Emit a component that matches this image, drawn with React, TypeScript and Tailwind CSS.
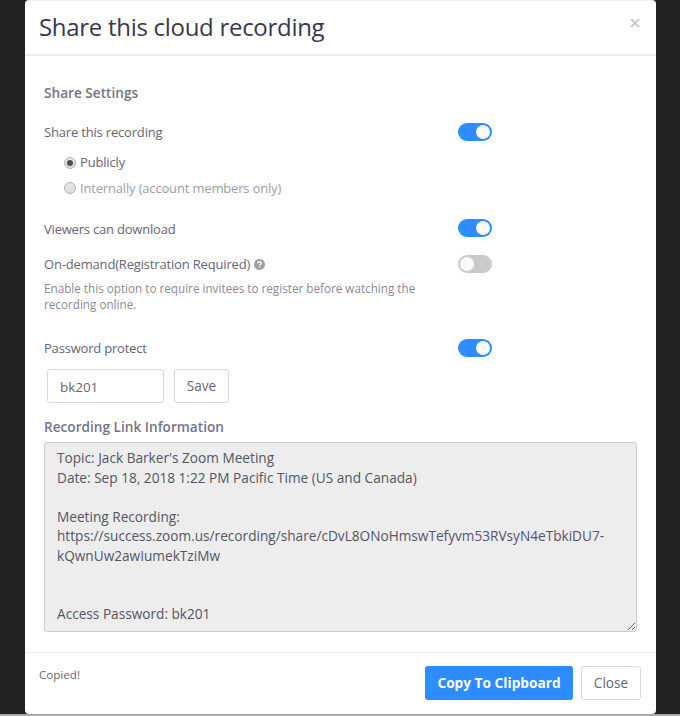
import React, { useState } from "react";

const linkInfo = `Topic: Jack Barker's Zoom Meeting
Date: Sep 18, 2018 1:22 PM Pacific Time (US and Canada)

Meeting Recording:
https://success.zoom.us/recording/share/cDvL8ONoHmswTefyvm53RVsyN4eTbkiDU7-
kQwnUw2awIumekTziMw


Access Password: bk201`;

type ToggleProps = {
  checked: boolean;
  onChange: () => void;
};

function Toggle({ checked, onChange }: ToggleProps) {
  return (
    <button
      role="switch"
      aria-checked={checked}
      onClick={onChange}
      className={`flex h-[18px] w-[34px] shrink-0 items-center rounded-full px-[2px] ${
        checked ? "justify-end bg-[#2d8cff]" : "justify-start bg-[#cacaca]"
      }`}
    >
      <span className="size-[14px] rounded-full bg-[#fafafa]" />
    </button>
  );
}

function Radio({ checked }: { checked: boolean }) {
  return (
    <span className="flex size-3 items-center justify-center rounded-full border border-[#b4b4b4] bg-linear-to-b from-[#e6e6e6] to-[#dcdcdc]">
      {checked && <span className="size-[6px] rounded-full bg-[#4f4f4f]" />}
    </span>
  );
}

function App() {
  const [share, setShare] = useState(true);
  const [audience, setAudience] = useState("public");
  const [download, setDownload] = useState(true);
  const [onDemand, setOnDemand] = useState(false);
  const [protect, setProtect] = useState(true);
  const [password, setPassword] = useState("bk201");

  return (
    <div className="h-[716px] w-[680px] overflow-hidden border-b-2 border-[#a9a9a9] bg-[#222222] pl-[25px] font-['Open_Sans',sans-serif] text-[13px] text-[#666674]">
      <div className="flex h-[714px] w-[631px] flex-col rounded-[4px] border-t border-[#efefef] bg-white">
        {/* Header */}
        <div className="flex h-[55px] shrink-0 justify-between border-b-2 border-[#ececec] pr-4 pl-[14px]">
          <h1 className="pt-[9px] text-[24px] leading-[34px] tracking-[-0.29px] text-[#39394d]">
            Share this cloud recording
          </h1>
          <button className="mt-[17px] flex size-[10px] items-center justify-center">
            <svg viewBox="0 0 10 10" className="size-[10px]" stroke="#cccccc" strokeWidth="2">
              <path d="M1 1L9 9M9 1L1 9" />
            </svg>
          </button>
        </div>

        {/* Body */}
        <div className="flex h-[596px] shrink-0 flex-col px-[19px] pt-[27px]">
          <h2 className="h-5 text-[13.65px] leading-5 font-semibold text-[#747487]">
            Share Settings
          </h2>

          <div className="mt-[19px] flex h-5 w-[448px] items-center justify-between">
            <span className="pt-[2px] tracking-[-0.18px]">Share this recording</span>
            <Toggle checked={share} onChange={() => setShare(!share)} />
          </div>
          <div className="mt-[11px] flex flex-col gap-[5px] pl-5 tracking-[-0.17px]">
            <button
              className="flex h-5 items-center gap-1"
              onClick={() => setAudience("public")}
            >
              <Radio checked={audience === "public"} />
              <span>Publicly</span>
            </button>
            <button
              className="flex h-5 items-center gap-1 text-[#9d9da7]"
              onClick={() => setAudience("internal")}
            >
              <Radio checked={audience === "internal"} />
              <span className="pt-[2px]">Internally (account members only)</span>
            </button>
          </div>

          <div className="mt-5 flex h-5 w-[448px] items-center justify-between">
            <span className="pt-1 tracking-[-0.2px]">Viewers can download</span>
            <Toggle checked={download} onChange={() => setDownload(!download)} />
          </div>

          <div className="mt-4 flex h-5 w-[448px] items-center justify-between">
            <span className="flex items-center gap-1 pt-[2px] tracking-[-0.17px]">
              On-demand(Registration Required)
              <svg viewBox="0 0 12 12" className="mb-px size-[11px]">
                <circle cx="6" cy="6" r="6" fill="#a0a0a0" />
                <path
                  d="M4 4.6C4 2.4 8 2.4 8 4.5C8 5.8 6.1 5.7 6.1 7.2M6.1 8.2V9.6"
                  fill="none"
                  stroke="#fff"
                  strokeWidth="1.5"
                />
              </svg>
            </span>
            <Toggle checked={onDemand} onChange={() => setOnDemand(!onDemand)} />
          </div>
          <p className="mt-[6px] w-[400px] text-[11.7px] leading-4 text-[#8a8a94]">
            Enable this option to require invitees to register before watching the
            <br />
            recording online.
          </p>

          <div className="mt-[26px] flex h-5 w-[448px] items-center justify-between">
            <span className="pt-[2px] tracking-[-0.2px]">Password protect</span>
            <Toggle checked={protect} onChange={() => setProtect(!protect)} />
          </div>
          <div className="mt-[11px] flex gap-[10px] pl-[3px]">
            <input
              value={password}
              onChange={(e) => setPassword(e.target.value)}
              className="h-[34px] w-[117px] rounded-[3px] border border-[#d8d8d8] px-3 pt-[2px] text-[13.4px] outline-none"
            />
            <button className="h-[34px] w-[55px] rounded-[3px] border border-[#d8d8d8] text-[13.6px]">
              Save
            </button>
          </div>

          <h2 className="mt-[14px] h-5 text-[13.65px] leading-5 font-semibold text-[#747487]">
            Recording Link Information
          </h2>
          <textarea
            readOnly
            value={linkInfo}
            className="mt-[5px] h-[190px] w-[593px] resize overflow-hidden rounded-[3px] border border-[#cccccc] bg-[#ededed] px-3 py-[5px] text-[13.65px] leading-[19.5px] text-[#555566] outline-none"
          />
        </div>

        {/* Footer */}
        <div className="flex flex-1 border-t border-[#ececec] pt-[13px] pr-[15px] pl-[14px]">
          <span className="mr-auto text-[11.6px] leading-[18px]">Copied!</span>
          <button className="mr-2 h-[34px] w-[148px] rounded-[3px] bg-[#2d8cff] text-[13.7px] font-bold text-white">
            Copy To Clipboard
          </button>
          <button className="h-[34px] w-[60px] rounded-[3px] border border-[#d8d8d8] text-[13.6px]">
            Close
          </button>
        </div>
      </div>
    </div>
  );
}

export default App;
